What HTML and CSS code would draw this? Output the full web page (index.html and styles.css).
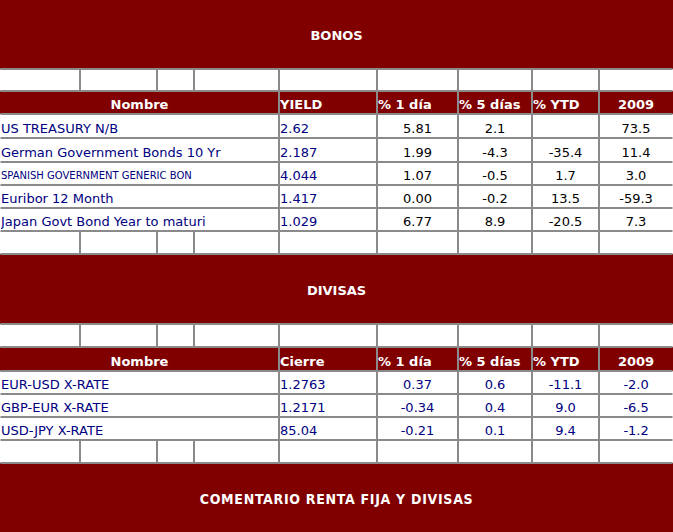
FILE: index.html
```html
<!DOCTYPE html>
<html lang="es">
<head>
<meta charset="utf-8">
<title>Bonos y Divisas</title>
<link rel="stylesheet" href="styles.css">
</head>
<body>
<table class="grid">
  <colgroup>
    <col class="w1"><col class="w2"><col class="w3"><col class="w4"><col class="w5"><col class="w6"><col class="w7"><col class="w8"><col class="w9">
  </colgroup>
  <tr class="band first"><td colspan="9">BONOS</td></tr>
  <tr class="blank h22"><td></td><td></td><td></td><td></td><td></td><td></td><td></td><td></td><td></td></tr>
  <tr class="head h23"><td colspan="4" class="c">Nombre</td><td>YIELD</td><td>% 1 día</td><td>% 5 días</td><td>% YTD</td><td class="c">2009</td></tr>
  <tr class="h24"><td colspan="4" class="n">US TREASURY N/B</td><td class="n">2.62</td><td class="k">5.81</td><td class="k">2.1</td><td class="k"></td><td class="k">73.5</td></tr>
  <tr class="h24"><td colspan="4" class="n">German Government Bonds 10 Yr</td><td class="n">2.187</td><td class="k">1.99</td><td class="k">-4.3</td><td class="k">-35.4</td><td class="k">11.4</td></tr>
  <tr class="h23"><td colspan="4" class="n small">SPANISH GOVERNMENT GENERIC BON</td><td class="n">4.044</td><td class="k">1.07</td><td class="k">-0.5</td><td class="k">1.7</td><td class="k">3.0</td></tr>
  <tr class="h23"><td colspan="4" class="n">Euribor 12 Month</td><td class="n">1.417</td><td class="k">0.00</td><td class="k">-0.2</td><td class="k">13.5</td><td class="k">-59.3</td></tr>
  <tr class="h23"><td colspan="4" class="n">Japan Govt Bond Year to maturi</td><td class="n">1.029</td><td class="k">6.77</td><td class="k">8.9</td><td class="k">-20.5</td><td class="k">7.3</td></tr>
  <tr class="blank h23"><td></td><td></td><td></td><td></td><td></td><td></td><td></td><td></td><td></td></tr>
  <tr class="band"><td colspan="9">DIVISAS</td></tr>
  <tr class="blank h23"><td></td><td></td><td></td><td></td><td></td><td></td><td></td><td></td><td></td></tr>
  <tr class="head h24"><td colspan="4" class="c">Nombre</td><td>Cierre</td><td>% 1 día</td><td>% 5 días</td><td>% YTD</td><td class="c">2009</td></tr>
  <tr class="h23"><td colspan="4" class="n">EUR-USD X-RATE</td><td class="n">1.2763</td><td class="v">0.37</td><td class="v">0.6</td><td class="v">-11.1</td><td class="v">-2.0</td></tr>
  <tr class="h23"><td colspan="4" class="n">GBP-EUR X-RATE</td><td class="n">1.2171</td><td class="v">-0.34</td><td class="v">0.4</td><td class="v">9.0</td><td class="v">-6.5</td></tr>
  <tr class="h23"><td colspan="4" class="n">USD-JPY X-RATE</td><td class="n">85.04</td><td class="v">-0.21</td><td class="v">0.1</td><td class="v">9.4</td><td class="v">-1.2</td></tr>
  <tr class="blank h23"><td></td><td></td><td></td><td></td><td></td><td></td><td></td><td></td><td></td></tr>
  <tr class="band last"><td colspan="9"><span class="cond">COMENTARIO RENTA FIJA Y DIVISAS</span></td></tr>
</table>
</body>
</html>
```

FILE: styles.css
```css
html, body {
  margin: 0;
  padding: 0;
  background: #ffffff;
  overflow: hidden;
}

.grid {
  border-collapse: separate;
  border-spacing: 0;
  table-layout: fixed;
  width: 673px;
  font-family: "DejaVu Sans", Verdana, sans-serif;
  font-size: 13px;
}

.w1 { width: 80px; }
.w2 { width: 77px; }
.w3 { width: 37px; }
.w4 { width: 85px; }
.w5 { width: 98px; }
.w6 { width: 81px; }
.w7 { width: 74px; }
.w8 { width: 67px; }
.w9 { width: 74px; }

.grid td {
  box-sizing: border-box;
  border: 1px solid #8a8a8a;
  padding: 0;
  vertical-align: bottom;
  line-height: 16px;
  color: #000080;
  white-space: nowrap;
  overflow: hidden;
  text-align: left;
}

.grid td:first-child { border-left-color: transparent; }
.grid td:last-child { border-right-color: transparent; }

.h22 td { height: 22px; }
.h23 td { height: 23px; }
.h24 td { height: 24px; }

.band td {
  height: 70px;
  background: #800000;
  color: #ffffff;
  font-weight: bold;
  text-align: center;
  vertical-align: middle;
  padding: 3px 0 0 0;
  border-left-color: transparent;
  border-right-color: transparent;
}

.band.first td {
  height: 69px;
  border-top-color: transparent;
}

.head td {
  background: #800000;
  color: #ffffff;
  font-weight: bold;
}

.grid td.c { text-align: center; }
.grid td.n { color: #000080; }
.grid td.k { color: #000000; text-align: center; }
.grid td.v { color: #000080; text-align: center; }
.grid td.small { font-size: 10px; }

.cond {
  font-family: "DejaVu Sans Condensed", "DejaVu Sans", sans-serif;
  font-stretch: condensed;
  font-size: 14px;
  letter-spacing: 0.7px;
}
```
